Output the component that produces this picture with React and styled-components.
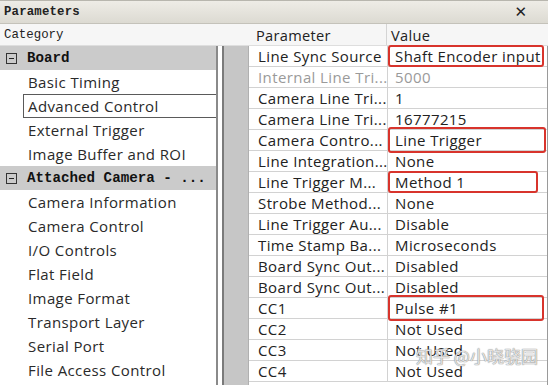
import styled, { createGlobalStyle } from "styled-components"

const Global = createGlobalStyle`
  html, body { margin: 0; padding: 0; background: #fff; }
  body { width: 548px; height: 385px; overflow: hidden; }
`

const Window = styled.div`
  position: relative;
  width: 548px;
  height: 385px;
  overflow: hidden;
  display: flex;
  flex-direction: column;
  background: #fff;
  font-family: "Open Sans", "Noto Sans", sans-serif;
  color: #222;
`

const TitleBar = styled.div`
  height: 24px;
  flex: none;
  display: flex;
  align-items: center;
  justify-content: space-between;
  padding: 0 21px 0 4px;
  background: linear-gradient(#eeece6, #dcdad2);
  border-top: 1px solid #b8b6ae;
  border-bottom: 1px solid #c4c2ba;
  box-sizing: border-box;
  .title {
    font-family: "Liberation Mono", "DejaVu Sans Mono", monospace;
    font-weight: bold;
    font-size: 12.3px;
    letter-spacing: 0.2px;
    color: #222;
  }
  .close {
    font-family: "DejaVu Sans", sans-serif;
    font-weight: bold;
    font-size: 15px;
    color: #222;
  }
`

const Body = styled.div`
  flex: 1;
  display: flex;
  min-height: 0;
`

const LeftPane = styled.div`
  width: 218px;
  flex: none;
  display: flex;
  flex-direction: column;
`

const Gap = styled.div`
  width: 4px;
  flex: none;
  display: flex;
  flex-direction: column;
  div:first-child { height: 22px; background: #f6f6f6; border-bottom: 1px solid #dedede; box-sizing: border-box; }
`

const RightPane = styled.div`
  flex: 1;
  display: flex;
  flex-direction: column;
  min-width: 0;
`

const Header = styled.div`
  height: 22px;
  flex: none;
  display: flex;
  align-items: center;
  background: #f6f6f6;
  border-bottom: 1px solid #dedede;
  box-sizing: border-box;
`

const CategoryLabel = styled.div`
  padding-left: 4px;
  font-family: "Liberation Mono", "DejaVu Sans Mono", monospace;
  font-size: 12.4px;
  color: #222;
`

const CategoryList = styled.div`
  flex: 1;
  border-right: 2px solid #8a8a8a;
  display: flex;
  flex-direction: column;
`

const GroupRow = styled.div`
  height: 24px;
  flex: none;
  display: flex;
  align-items: center;
  gap: 10px;
  padding-left: 6px;
  background: #cbcbcb;
  font-family: "Liberation Mono", "DejaVu Sans Mono", monospace;
  font-weight: bold;
  font-size: 14.2px;
  color: #111;
  white-space: nowrap;
`

const Toggle = styled.span`
  width: 9px;
  height: 9px;
  border: 1px solid #333;
  display: flex;
  align-items: center;
  justify-content: center;
  flex: none;
  &::before { content: ""; width: 5px; height: 1px; background: #222; }
`

const Item = styled.div`
  height: 24px;
  flex: none;
  display: flex;
  align-items: center;
  margin-left: ${p => (p.selected ? "23px" : "0")};
  padding-left: ${p => (p.selected ? "4px" : "28px")};
  border: ${p => (p.selected ? "1px solid #5a5a5a" : "none")};
  border-right: none;
  box-sizing: border-box;
  font-size: 15px;
  letter-spacing: 0.4px;
  color: #2a2a2a;
  white-space: nowrap;
`

const TableWrap = styled.div`
  flex: 1;
  display: flex;
  border-left: 2px solid #7a7a7a;
  border-right: 1px solid #9a9a9a;
  min-height: 0;
`

const Gutter = styled.div`
  width: 24px;
  flex: none;
  background: #c6c6c6;
  border-right: 1px solid #b0b0b0;
`

const Grid = styled.div`
  flex: 1;
  display: grid;
  grid-template-columns: 138px 1fr;
  grid-auto-rows: 21px;
  align-content: start;
`

const HeadCell = styled.div`
  display: flex;
  align-items: center;
  padding-left: ${p => (p.value ? "4px" : "8px")};
  border-left: ${p => (p.value ? "1px solid #d4d4d4" : "none")};
  font-size: 14.6px;
  letter-spacing: 0.3px;
  color: #222;
`

const Cell = styled.div`
  position: relative;
  display: flex;
  align-items: center;
  padding-left: ${p => (p.value ? "7px" : "9px")};
  border-bottom: 1px solid #d2d2d2;
  border-left: ${p => (p.value ? "1px solid #d2d2d2" : "none")};
  box-sizing: border-box;
  font-size: 15px;
  letter-spacing: 0.4px;
  color: ${p => (p.disabled ? "#9a9a9a" : "#222")};
  white-space: nowrap;
  overflow: visible;
  &::after {
    content: "";
    display: ${p => (p.marked ? "block" : "none")};
    position: absolute;
    left: 0;
    top: ${p => (p.tall ? "-3px" : "-1px")};
    right: ${p => p.marked || "4px"};
    bottom: ${p => (p.tall ? "-3px" : "-1px")};
    border: 2.5px solid #d8342c;
    border-radius: 3px;
  }
`

const Watermark = styled.div`
  position: absolute;
  left: 416px;
  top: 343px;
  font-family: "Noto Sans CJK SC", sans-serif;
  font-size: 17px;
  color: rgba(255, 255, 255, 0.75);
  text-shadow: 0 0 1px #888, 0 0 1px #888;
  white-space: nowrap;
`

const categories = [
  { group: "Board" },
  { name: "Basic Timing" },
  { name: "Advanced Control", selected: true },
  { name: "External Trigger" },
  { name: "Image Buffer and ROI" },
  { group: "Attached Camera - ..." },
  { name: "Camera Information" },
  { name: "Camera Control" },
  { name: "I/O Controls" },
  { name: "Flat Field" },
  { name: "Image Format" },
  { name: "Transport Layer" },
  { name: "Serial Port" },
  { name: "File Access Control" },
]

const params = [
  { p: "Line Sync Source", v: "Shaft Encoder input", mark: "3px" },
  { p: "Internal Line Tri...", v: "5000", disabled: true },
  { p: "Camera Line Tri...", v: "1" },
  { p: "Camera Line Tri...", v: "16777215" },
  { p: "Camera Contro...", v: "Line Trigger", mark: "1px", tall: true },
  { p: "Line Integration...", v: "None" },
  { p: "Line Trigger M...", v: "Method 1", mark: "9px" },
  { p: "Strobe Method...", v: "None" },
  { p: "Line Trigger Au...", v: "Disable" },
  { p: "Time Stamp Ba...", v: "Microseconds" },
  { p: "Board Sync Out...", v: "Disabled" },
  { p: "Board Sync Out...", v: "Disabled" },
  { p: "CC1", v: "Pulse #1", mark: "3px", tall: true },
  { p: "CC2", v: "Not Used" },
  { p: "CC3", v: "Not Used" },
  { p: "CC4", v: "Not Used" },
]

const App = () => {
  return (
    <Window>
      <Global />
      <TitleBar>
        <span className="title">Parameters</span>
        <span className="close">✕</span>
      </TitleBar>
      <Body>
        <LeftPane>
          <Header>
            <CategoryLabel>Category</CategoryLabel>
          </Header>
          <CategoryList>
            {categories.map((c, i) =>
              c.group ? (
                <GroupRow key={i}>
                  <Toggle />
                  {c.group}
                </GroupRow>
              ) : (
                <Item key={i} selected={c.selected}>{c.name}</Item>
              )
            )}
          </CategoryList>
        </LeftPane>
        <Gap><div /></Gap>
        <RightPane>
          <Header>
            <div style={{ width: 26 }} />
            <Grid>
              <HeadCell>Parameter</HeadCell>
              <HeadCell value>Value</HeadCell>
            </Grid>
          </Header>
          <TableWrap>
            <Gutter />
            <Grid>
              {params.map((r, i) => [
                <Cell key={i + "p"} disabled={r.disabled}>{r.p}</Cell>,
                <Cell key={i + "v"} value disabled={r.disabled} marked={r.mark} tall={r.tall}>{r.v}</Cell>,
              ])}
            </Grid>
          </TableWrap>
        </RightPane>
      </Body>
      <Watermark>知乎 @小晓骁园</Watermark>
    </Window>
  )
}

export default App
